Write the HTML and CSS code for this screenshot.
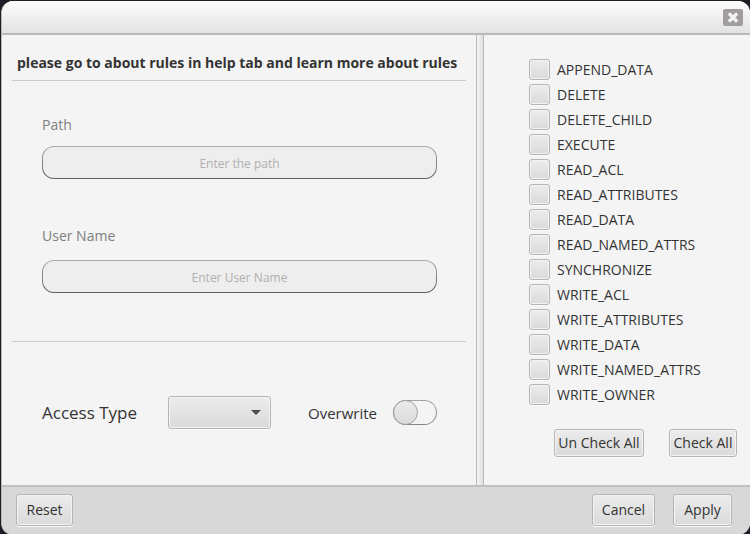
FILE: index.html
```html
<!DOCTYPE html>
<html lang="en">
<head>
<meta charset="utf-8">
<title>Rules</title>
<link rel="stylesheet" href="styles.css">
</head>
<body>
<form class="dialog">
  <header class="titlebar">
    <button class="close" type="button" aria-label="Close">
      <svg viewBox="0 0 20 17" width="20" height="17"><path d="M7 5.500L13 11.500M13 5.500L7 11.500" stroke="#f3f3f3" stroke-width="3.300" stroke-linecap="square"/></svg>
    </button>
  </header>
  <main class="content">
    <section class="details">
      <h1 class="notice">please go to about rules in help tab and learn more about rules</h1>
      <div class="fields">
        <div class="field">
          <label for="path">Path</label>
          <input id="path" type="text" placeholder="Enter the path">
        </div>
        <div class="field field-user">
          <label for="user">User Name</label>
          <input id="user" type="text" placeholder="Enter User Name">
        </div>
      </div>
      <div class="options">
        <label class="access-label" for="access">Access Type</label>
        <span class="combo">
          <select id="access"><option></option></select>
          <svg class="arrow" viewBox="0 0 10 5" width="10" height="5"><path d="M0 0H10L5 5Z" fill="#4d4d4d"/></svg>
        </span>
        <label class="switch-label" for="overwrite">Overwrite</label>
        <input class="switch" id="overwrite" type="checkbox">
      </div>
    </section>
    <div class="divider"></div>
    <section class="permissions">
      <div class="checks">
        <label class="check"><input type="checkbox">APPEND_DATA</label>
        <label class="check"><input type="checkbox">DELETE</label>
        <label class="check"><input type="checkbox">DELETE_CHILD</label>
        <label class="check"><input type="checkbox">EXECUTE</label>
        <label class="check"><input type="checkbox">READ_ACL</label>
        <label class="check"><input type="checkbox">READ_ATTRIBUTES</label>
        <label class="check"><input type="checkbox">READ_DATA</label>
        <label class="check"><input type="checkbox">READ_NAMED_ATTRS</label>
        <label class="check"><input type="checkbox">SYNCHRONIZE</label>
        <label class="check"><input type="checkbox">WRITE_ACL</label>
        <label class="check"><input type="checkbox">WRITE_ATTRIBUTES</label>
        <label class="check"><input type="checkbox">WRITE_DATA</label>
        <label class="check"><input type="checkbox">WRITE_NAMED_ATTRS</label>
        <label class="check"><input type="checkbox">WRITE_OWNER</label>
      </div>
      <div class="bulk">
        <button class="btn uncheck" type="button">Un Check All</button>
        <button class="btn checkall" type="button">Check All</button>
      </div>
    </section>
  </main>
  <footer class="actions">
    <button class="btn reset" type="reset">Reset</button>
    <button class="btn cancel" type="button">Cancel</button>
    <button class="btn apply" type="submit">Apply</button>
  </footer>
</form>
</body>
</html>
```
FILE: styles.css
```css
*,
*::before {
  box-sizing: border-box;
}

body {
  margin: 0;
  min-height: 100vh;
  display: flex;
  padding: 1px 0 0 1px;
  background: #1e1d25;
  color: #333;
  font: 14px/20px "Open Sans", "Noto Sans", sans-serif;
}

input,
select,
button {
  margin: 0;
  font: inherit;
  color: inherit;
  appearance: none;
}

.dialog {
  flex: 1;
  display: flex;
  flex-direction: column;
  overflow: hidden;
  border: solid #b9b9b9;
  border-width: 0 0 1px 1px;
  border-radius: 12px;
  background: #f4f4f4;
}

.titlebar {
  display: flex;
  justify-content: flex-end;
  height: 34px;
  padding: 8px 7px 0;
  border-bottom: 2px solid #b9b9b9;
  background: linear-gradient(#fdfdfd, #e2e2e2);
}

.close {
  width: 20px;
  height: 17px;
  padding: 0;
  border: 0;
  border-radius: 2px;
  background: #a19d9c;
}

.close svg {
  display: block;
}

.content {
  flex: 1;
  display: flex;
}

.details {
  flex: 1;
  padding: 0 10px;
}

.notice {
  margin: 0;
  padding: 17px 5px 7px;
  border-bottom: 1px solid #cacaca;
  font-size: 14px;
  line-height: 21px;
  white-space: nowrap;
}

.fields {
  display: grid;
  gap: 47px;
  padding: 34px 29px 48px 30px;
  border-bottom: 1px solid #cacaca;
}

.field {
  display: grid;
  gap: 11px;
  color: #808080;
}

.field-user {
  gap: 14px;
}

.field input {
  width: 100%;
  height: 33px;
  padding: 2px 2px 0;
  border: 1px solid transparent;
  border-radius: 12px;
  background: linear-gradient(#eee, #eee) padding-box, linear-gradient(#adadad, #606060) border-box;
  font-size: 12px;
  text-align: center;
}

.field input::placeholder {
  color: #b0b0b0;
  opacity: 1;
}

.options {
  display: flex;
  align-items: center;
  padding: 54px 29px 0 30px;
}

.access-label {
  width: 126px;
  font-size: 17px;
}

.combo {
  position: relative;
  display: flex;
  width: 103px;
}

.combo select {
  width: 100%;
  height: 33px;
}

.arrow {
  position: absolute;
  top: 14px;
  right: 10px;
  pointer-events: none;
}

.switch-label {
  margin-left: auto;
  margin-right: 16px;
  font-size: 15px;
}

.switch {
  display: flex;
  align-items: center;
  width: 44px;
  height: 25px;
  border: 1px solid transparent;
  border-radius: 13px;
  background: linear-gradient(#f4f4f4, #f4f4f4) padding-box, linear-gradient(#a4a4a4, #848484) border-box;
}

.switch::before {
  content: "";
  flex: none;
  width: 25px;
  height: 25px;
  margin: -1px;
  border: 1px solid #a0a0a0;
  border-radius: 50%;
  background: linear-gradient(#ebebeb, #dadada);
}

.switch:checked::before {
  margin-left: 18px;
}

.divider {
  width: 8px;
  border: solid #b9b9b9;
  border-width: 0 1px;
  background: linear-gradient(90deg, #f5f5f5, #dedede);
}

.permissions {
  flex: 0 0 266px;
  padding: 22px 13px 28px 45px;
}

.check {
  display: flex;
  align-items: center;
  gap: 7px;
  height: 25px;
}

.check input,
.combo select,
.btn {
  border: 1px solid #b5b5b5;
  border-radius: 3px;
  background: linear-gradient(#ececec, #dadada);
  box-shadow: inset 0 0 0 1px #f3f3f3, 0 1px #fafafa;
}

.check input {
  width: 21px;
  height: 21px;
}

.check input:checked {
  background: #8a8a8a;
}

.bulk {
  display: flex;
  justify-content: flex-end;
  gap: 25px;
  padding-top: 22px;
}

.btn {
  height: 32px;
  padding: 0;
  white-space: nowrap;
}

.bulk .btn {
  height: 28px;
}

.uncheck {
  width: 90px;
}

.checkall {
  width: 68px;
}

.actions {
  display: flex;
  gap: 18px;
  height: 49px;
  padding: 7px 18px 0 14px;
  border-top: 2px solid #c0c0c0;
  background: #d8d8d8;
}

.reset {
  width: 57px;
  margin-right: auto;
}

.cancel {
  width: 63px;
}

.apply {
  width: 59px;
}
```
